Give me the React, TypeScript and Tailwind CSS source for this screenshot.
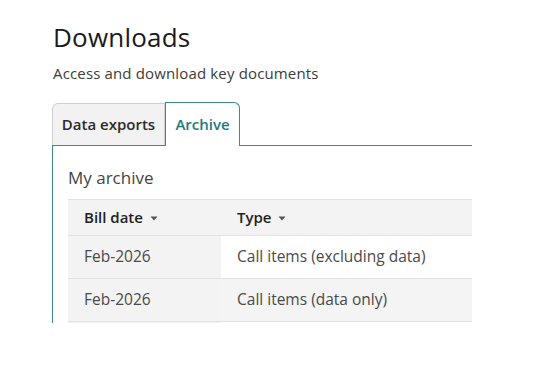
import React from "react";

const teal = "border-[#3b8b8f]";

function Caret() {
    return (
        <svg width="8" height="5" viewBox="0 0 8 5" className="ml-[7px] mt-[2px]">
            <path d="M0.5 0.5 L7.5 0.5 L4 4.5 Z" fill="#555" />
        </svg>
    );
}

const rows = [
    { date: "Feb-2026", type: "Call items (excluding data)", typeBg: "bg-white" },
    { date: "Feb-2026", type: "Call items (data only)", typeBg: "bg-[#f4f4f4]" },
    { date: "", type: "", typeBg: "bg-white" },
];

export default function App() {
    return (
        <div className="w-[558px] h-[379px] bg-white overflow-hidden font-['Open_Sans',sans-serif]">
            <div className="pl-[53px] pt-[20px]">
                <h1 className="text-[26px] leading-[34px] text-[#1a1a1a] tracking-[0.2px]">Downloads</h1>
                <p className="mt-[9px] text-[15px] leading-[20px] text-[#3c3c3c] tracking-[0.15px]">Access and download key documents</p>

                <div className="mt-[19px] ml-[-1px] w-[420px]">
                    {/* Tabs */}
                    <div className="flex items-end h-[43px]">
                        <div className="h-[42px] w-[113px] flex items-center justify-center border border-b-0 border-[#cfcfcf] bg-[#f2f2f2] rounded-tl-[6px] text-[15px] font-semibold text-[#2b2b2b]">
                            Data exports
                        </div>
                        <div className={`relative z-10 h-[44px] mb-[-1px] w-[75px] flex items-center justify-center border border-b-0 ${teal} bg-white rounded-tr-[6px] text-[15px] font-semibold text-[#1f7a7e]`}>
                            Archive
                        </div>
                    </div>

                    {/* Panel */}
                    <div className={`h-[178px] border-l border-t ${teal} overflow-hidden pl-[15px] pt-[20px]`}>
                        <h2 className="text-[17px] leading-[24px] text-[#444]">My archive</h2>
                        <div className="mt-[9px] w-[420px]">
                            <div className="flex h-[37px] items-center bg-[#f3f3f3] border-t border-b border-[#e2e2e2] text-[15px] font-semibold text-[#1f1f1f]">
                                <div className="w-[153px] pl-[16px] flex items-center">Bill date<Caret /></div>
                                <div className="pl-[16px] flex items-center">Type<Caret /></div>
                            </div>
                            {rows.map((r, i) => (
                                <div key={i} className="flex h-[43px] border-b border-[#e2e2e2] text-[15.5px] text-[#4a4a4a]">
                                    <div className="w-[153px] pl-[16px] flex items-center bg-[#f3f3f3]">{r.date}</div>
                                    <div className={`flex-1 pl-[16px] flex items-center ${r.typeBg}`}>{r.type}</div>
                                </div>
                            ))}
                        </div>
                    </div>
                </div>
            </div>
        </div>
    );
}
